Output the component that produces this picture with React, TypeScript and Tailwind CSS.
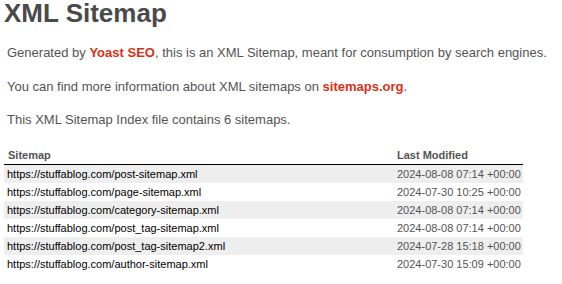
const sitemaps = [
  { url: 'https://stuffablog.com/post-sitemap.xml', modified: '2024-08-08 07:14 +00:00' },
  { url: 'https://stuffablog.com/page-sitemap.xml', modified: '2024-07-30 10:25 +00:00' },
  { url: 'https://stuffablog.com/category-sitemap.xml', modified: '2024-08-08 07:14 +00:00' },
  { url: 'https://stuffablog.com/post_tag-sitemap.xml', modified: '2024-08-08 07:14 +00:00' },
  { url: 'https://stuffablog.com/post_tag-sitemap2.xml', modified: '2024-07-28 15:18 +00:00' },
  { url: 'https://stuffablog.com/author-sitemap.xml', modified: '2024-07-30 15:09 +00:00' },
]

export default function App() {
  return (
    <div className="w-[562px] h-[284px] overflow-hidden bg-white text-[13px] text-[#545353] font-['Liberation_Sans',Arial,sans-serif]">
      <div className="pl-[4px]">
        <h1 className="text-[26px] font-bold leading-[26px] text-[#4a4a4a]">XML Sitemap</h1>
        <div className="mt-[19px]">
          <p className="mx-[3px] leading-[15.6px]">
            Generated by{' '}
            <a className="text-[#da3114] font-semibold">Yoast SEO</a>, this is an XML Sitemap, meant for
            consumption by search engines.
          </p>
          <p className="mx-[3px] mt-[18px] leading-[15.6px]">
            You can find more information about XML sitemaps on{' '}
            <a className="text-[#da3114] font-semibold">sitemaps.org</a>.
          </p>
          <p className="mx-[3px] mt-[18px] leading-[15.6px]">
            This XML Sitemap Index file contains 6 sitemaps.
          </p>
        </div>
        <table className="mt-[18px] w-[519px] border-collapse text-[11px]">
          <thead>
            <tr>
              <th className="w-[390px] h-[18px] p-0 pl-[4px] text-left font-bold border-b border-black leading-[18px]">
                Sitemap
              </th>
              <th className="h-[18px] p-0 pl-[3px] text-left font-bold border-b border-black leading-[18px]">
                Last Modified
              </th>
            </tr>
          </thead>
          <tbody>
            {sitemaps.map((s, i) => (
              <tr key={s.url} className={i % 2 === 0 ? 'bg-[#eeeeee]' : ''}>
                <td className="h-[18px] p-0 pl-[3px] leading-[18px] text-black">{s.url}</td>
                <td className="h-[18px] p-0 pl-[3px] leading-[18px]">{s.modified}</td>
              </tr>
            ))}
          </tbody>
        </table>
      </div>
    </div>
  )
}
